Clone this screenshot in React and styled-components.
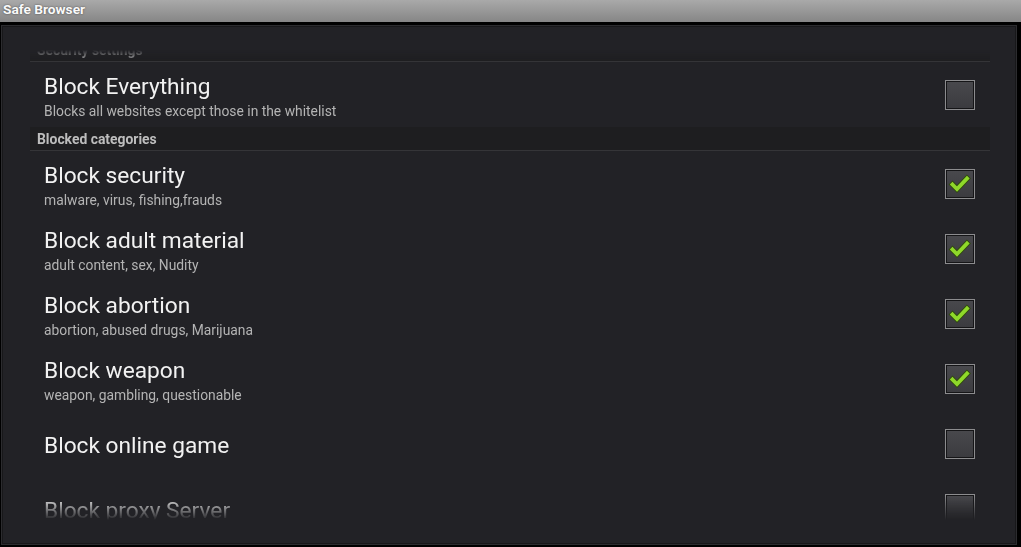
import React from "react";
import styled, { createGlobalStyle } from "styled-components";

const Global = createGlobalStyle`
  html, body { margin: 0; padding: 0; background: #000; }
  body { font-family: Roboto, "Noto Sans", sans-serif; }
  * { box-sizing: border-box; }
`;

const Window = styled.div`
  width: 1021px;
  height: 547px;
  display: flex;
  flex-direction: column;
  background: #000;
  overflow: hidden;
`;

const TitleBar = styled.div`
  height: 22px;
  flex: none;
  background: linear-gradient(#a9a9a9, #868686);
  color: #fafafa;
  font-weight: 700;
  font-size: 13.7px;
  line-height: 18px;
  padding-left: 3px;
  text-shadow: 0 0 2px rgba(0, 0, 0, 0.55);
`;

const Frame = styled.div`
  flex: 1;
  display: flex;
  padding: 3px 4px 2px 1px;
  background: #000;
`;

const Panel = styled.div`
  flex: 1;
  display: flex;
  flex-direction: column;
  background: #222226;
  border: 1px solid #2c2c2f;
  box-shadow: inset 0 0 0 1px #18181a;
  padding: 1px 26px 22px 28px;
`;

const Scroller = styled.div`
  height: 493px;
  overflow: hidden;
  -webkit-mask-image: linear-gradient(
    to bottom,
    transparent 0,
    transparent 23px,
    #000 35px,
    #000 calc(100% - 24px),
    transparent 100%
  );
  mask-image: linear-gradient(
    to bottom,
    transparent 0,
    transparent 23px,
    #000 35px,
    #000 calc(100% - 24px),
    transparent 100%
  );
`;

const List = styled.div`
  display: flex;
  flex-direction: column;
  margin-top: ${(p) => p.$offset}px;
`;

const Category = styled.div`
  height: 24px;
  display: flex;
  align-items: center;
  padding-left: 7px;
  background: #1e1e20;
  border-bottom: 1px solid #353538;
  color: #bdbdbd;
  font-size: 13.9px;
  font-weight: 700;
`;

const Row = styled.div`
  height: 65px;
  flex: none;
  display: flex;
  align-items: center;
  justify-content: space-between;
  padding: 0 15px 0 14px;
`;

const TextBlock = styled.div`
  display: flex;
  flex-direction: column;
  padding-top: 4px;
`;

const Title = styled.div`
  color: #f2f2f2;
  font-size: 22.7px;
  line-height: 28px;
`;

const Summary = styled.div`
  color: #b4b4b4;
  font-size: 13.85px;
  line-height: 20px;
`;

const Box = styled.div`
  width: 30px;
  height: 30px;
  flex: none;
  margin-top: 1px;
  border: 1px solid #8c8c8e;
  box-shadow: inset 0 0 0 1px #151517;
  background: linear-gradient(#49494d, #3b3b3f);
  display: flex;
  align-items: center;
  justify-content: center;
`;

const Check = () => (
  <svg width="26" height="26" viewBox="0 0 26 26">
    <polyline
      points="5.5,13.5 10,18 20,7.5"
      fill="none"
      stroke="#2f4a0c"
      strokeWidth="5.5"
      strokeLinecap="square"
    />
    <polyline
      points="5.5,13.5 10,18 20,7.5"
      fill="none"
      stroke="#8fd82a"
      strokeWidth="3.8"
      strokeLinecap="square"
    />
  </svg>
);

const items = [
  { type: "cat", title: "Security settings" },
  {
    title: "Block Everything",
    summary: "Blocks all websites except those in the whitelist",
    checked: false,
  },
  { type: "cat", title: "Blocked categories" },
  { title: "Block security", summary: "malware, virus, fishing,frauds", checked: true },
  { title: "Block adult material", summary: "adult content, sex, Nudity", checked: true },
  { title: "Block abortion", summary: "abortion, abused drugs, Marijuana", checked: true },
  { title: "Block weapon", summary: "weapon, gambling, questionable", checked: true },
  { title: "Block online game", checked: false },
  { title: "Block proxy Server", checked: false },
];

export default function App() {
  return (
    <>
      <Global />
      <Window>
        <TitleBar>Safe Browser</TitleBar>
        <Frame>
          <Panel>
            <Scroller>
              <List $offset={11}>
                {items.map((it, i) =>
                  it.type === "cat" ? (
                    <Category key={i}>{it.title}</Category>
                  ) : (
                    <Row key={i}>
                      <TextBlock>
                        <Title>{it.title}</Title>
                        {it.summary && <Summary>{it.summary}</Summary>}
                      </TextBlock>
                      <Box>{it.checked && <Check />}</Box>
                    </Row>
                  )
                )}
              </List>
            </Scroller>
          </Panel>
        </Frame>
      </Window>
    </>
  );
}
